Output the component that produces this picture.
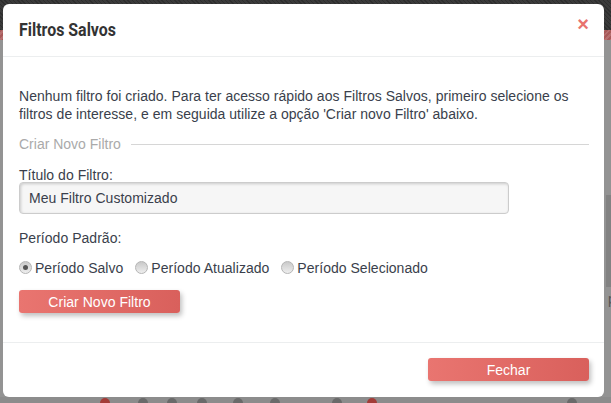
<style>
:global(body){margin:0;background:#8f8f8f;font-family:"Liberation Sans",Arial,sans-serif;}
.page{width:611px;height:403px;overflow:hidden;position:relative;display:flex;flex-direction:column;}
.top{height:30px;background:repeating-linear-gradient(45deg,#2e2e2e 0 1px,#3a3a3a 1px 3px);}
.hatch{height:10px;background:repeating-linear-gradient(135deg,#a85a5a 0 2px,#b57070 2px 4px);}
.rest{flex:1;background:#939393;display:flex;justify-content:flex-end;}
.side{width:5px;height:92px;margin-top:155px;background:#828282;position:relative;}
.p{position:absolute;left:2px;top:96px;font-size:14px;line-height:16px;color:#555;}
.strip{height:6px;background:#8c8c8c;display:grid;grid-template-columns:38px 29px 30px 36px 37px 62px 35px 200px 26px;padding-left:100px;}
.strip b{display:block;width:10px;height:5px;margin-top:1px;border-radius:5px 5px 0 0;background:#6a6a6a;}
.strip b.red{background:#a33c38;}
.modal{position:absolute;left:3px;top:4px;width:601px;height:393px;background:#fff;border-radius:6px;display:flex;flex-direction:column;}
.head{height:52px;border-bottom:1px solid #eceeef;display:flex;align-items:center;justify-content:space-between;padding:0 15px 0 16px;flex:none;}
h4{margin:0;font:700 18px/1 Roboto,sans-serif;color:#333;transform:scaleX(.885);transform-origin:left center;white-space:nowrap;}
.close{color:#e8736f;font-size:20px;font-weight:700;line-height:1;margin-top:-12px;}
.body{flex:1;padding:30px 15px 0 16px;font-size:14px;letter-spacing:.028px;color:#3a3f4c;line-height:18px;}
p{margin:0;}
.legend{display:flex;align-items:center;gap:10px;color:#aaa;margin-top:12px;letter-spacing:0;}
.legend::after{content:"";flex:1;height:1px;background:#d6d6d6;}
label.t{display:block;margin-top:13px;}
input.text{display:block;box-sizing:border-box;width:490px;height:32px;margin-top:-2px;padding:0 9px;border:1px solid #ccc;border-radius:4px;background:#f6f6f6;box-shadow:inset 1px 1px 3px rgba(0,0,0,.18);font:14px "Liberation Sans",Arial,sans-serif;letter-spacing:.028px;color:#3a3f4c;}
.pp{margin-top:15px;}
.radios{display:flex;margin-top:12px;align-items:center;}
.radios label{display:flex;align-items:center;gap:3px;margin-right:12px;}
.r{width:13px;height:13px;border-radius:50%;background:linear-gradient(#c9c9c9,#eee);border:1px solid #b5b5b5;box-sizing:border-box;display:flex;align-items:center;justify-content:center;margin-top:-2px;}
.r.on::after{content:"";width:5px;height:5px;border-radius:50%;background:#555;}
.btn{display:block;border:0;border-radius:3px;background:linear-gradient(90deg,#e97570,#d9605c);color:#fff;font:14px "Liberation Sans",Arial,sans-serif;letter-spacing:.028px;height:23px;width:161px;padding:0;box-shadow:2px 3px 5px rgba(0,0,0,.25);}
.create{margin-top:13px;}
.foot{box-sizing:border-box;height:55px;border-top:1px solid #eceeef;flex:none;display:flex;justify-content:flex-end;align-items:flex-start;padding:15px 15px 0;}
</style>

<div class="page">
  <div class="top"></div>
  <div class="hatch"></div>
  <div class="rest"><div class="side"><span class="p">p</span></div></div>
  <div class="strip"><i><b class="red"></b></i><i><b></b></i><i><b></b></i><i><b></b></i><i><b></b></i><i><b></b></i><i><b></b></i><i><b class="red"></b></i><i><b></b></i></div>
  <div class="modal">
    <div class="head"><h4>Filtros Salvos</h4><span class="close">×</span></div>
    <div class="body">
      <p>Nenhum filtro foi criado. Para ter acesso rápido aos Filtros Salvos, primeiro selecione os<br>filtros de interesse, e em seguida utilize a opção 'Criar novo Filtro' abaixo.</p>
      <div class="legend">Criar Novo Filtro</div>
      <label class="t" for="f">Título do Filtro:</label>
      <input class="text" id="f" value="Meu Filtro Customizado">
      <div class="pp">Período Padrão:</div>
      <div class="radios">
        <label><span class="r on"></span>Período Salvo</label>
        <label><span class="r"></span>Período Atualizado</label>
        <label><span class="r"></span>Período Selecionado</label>
      </div>
      <button class="btn create">Criar Novo Filtro</button>
    </div>
    <div class="foot"><button class="btn">Fechar</button></div>
  </div>
</div>
